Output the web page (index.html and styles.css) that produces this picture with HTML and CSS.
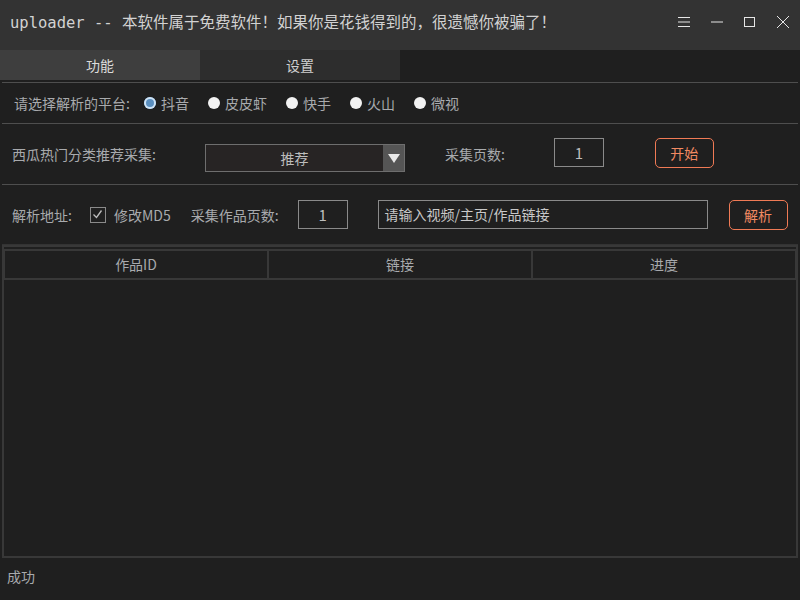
FILE: index.html
```html
<!DOCTYPE html>
<html lang="zh">
<head>
    <meta charset="UTF-8">
    <title>uploader</title>
    <link rel="stylesheet" href="styles.css">
</head>
<body>
    <div class="titlebar">
        <div class="title">uploader -- 本软件属于免费软件！如果你是花钱得到的，很遗憾你被骗了！</div>
        <div class="win-btns">
            <svg width="14" height="12" viewBox="0 0 14 12"><path d="M1 1.5h12M1 6h12M1 10.5h12" stroke="#e6e6e6" stroke-width="1"/></svg>
            <svg width="14" height="12" viewBox="0 0 14 12"><path d="M1 6h12" stroke="#e6e6e6" stroke-width="1"/></svg>
            <svg width="14" height="12" viewBox="0 0 14 12"><rect x="1.5" y="1.5" width="10" height="9" fill="none" stroke="#e6e6e6" stroke-width="1"/></svg>
            <svg width="14" height="14" viewBox="0 0 14 14"><path d="M1 1l12 12M13 1L1 13" stroke="#e6e6e6" stroke-width="1"/></svg>
        </div>
    </div>

    <div class="tabs">
        <div class="tab active">功能</div>
        <div class="tab">设置</div>
    </div>

    <div class="content">
        <div class="row row-platform">
            <span class="label">请选择解析的平台:</span>
            <label class="radio"><span class="dot checked"></span>抖音</label>
            <label class="radio"><span class="dot"></span>皮皮虾</label>
            <label class="radio"><span class="dot"></span>快手</label>
            <label class="radio"><span class="dot"></span>火山</label>
            <label class="radio"><span class="dot"></span>微视</label>
        </div>

        <div class="row row-xigua">
            <span class="label">西瓜热门分类推荐采集:</span>
            <div class="combo">
                <span class="combo-text">推荐</span>
                <span class="combo-arrow"></span>
            </div>
            <span class="label pages-label">采集页数:</span>
            <div class="num-box">1</div>
            <div class="btn">开始</div>
        </div>

        <div class="row row-parse">
            <span class="label">解析地址:</span>
            <label class="check">
                <span class="box"><svg width="13" height="13" viewBox="0 0 13 13"><path d="M2.5 6.5l3 3 5-7" fill="none" stroke="#bdbdbd" stroke-width="1.3"/></svg></span>修改MD5
            </label>
            <span class="label">采集作品页数:</span>
            <div class="num-box">1</div>
            <div class="url-box">请输入视频/主页/作品链接</div>
            <div class="btn">解析</div>
        </div>

        <div class="table">
            <div class="thead">
                <div class="th">作品ID</div>
                <div class="th">链接</div>
                <div class="th">进度</div>
            </div>
        </div>
    </div>

    <div class="status">成功</div>
</body>
</html>
```

FILE: styles.css
```css
* {
    box-sizing: border-box;
}

body {
    margin: 0;
    width: 800px;
    height: 600px;
    background: #1f1f1f;
    font-family: "Noto Sans CJK SC", "Microsoft YaHei", sans-serif;
    font-size: 14px;
    color: #a8aaad;
    overflow: hidden;
}

.titlebar {
    height: 50px;
    background: #333333;
    display: flex;
    align-items: center;
    padding: 0 10px 0 10px;
}
.title {
    flex: 1;
    font-family: "DejaVu Sans Mono", "Noto Sans CJK SC", monospace;
    font-size: 15.5px;
    color: #d2d2d2;
    margin-top: -8px;
}
.win-btns {
    display: flex;
    align-items: center;
    gap: 19px;
    margin-top: -6px;
}

.tabs {
    display: flex;
    height: 30px;
}
.tab {
    width: 200px;
    background: #2d2d2d;
    color: #cfcfcf;
    text-align: center;
    line-height: 30px;
}
.tab.active {
    background: #3e3e3e;
    color: #dcdcdc;
}

.content {
    padding: 0 2px;
    border-top: 2px solid #1f1f1f;
}

.row {
    display: flex;
    align-items: center;
    border-top: 1px solid #4e4e4e;
}
.row-platform {
    height: 41px;
    padding-left: 12px;
}
.row-xigua {
    height: 61px;
    padding-left: 10px;
}
.row-parse {
    height: 61px;
    padding-left: 10px;
    border-bottom: 1px solid #333;
}

/* radio buttons */
.radio {
    display: flex;
    align-items: center;
    margin-left: 19px;
}
.radio:first-of-type {
    margin-left: 14px;
}
.radio .dot {
    width: 12px;
    height: 12px;
    border-radius: 50%;
    background: #f2f2f2;
    margin-right: 5px;
}
.radio .dot.checked {
    background: #5a8fc0;
    box-shadow: inset 0 0 0 2px #cfe3f5;
}

/* combobox */
.combo {
    margin-left: 49px;
    width: 200px;
    height: 28px;
    border: 1px solid #6e6e6e;
    background: #272424;
    display: flex;
    margin-top: 7px;
}
.combo-text {
    flex: 1;
    text-align: center;
    line-height: 26px;
    color: #bdbdbd;
}
.combo-arrow {
    width: 21px;
    background: #555555;
    position: relative;
}
.combo-arrow::after {
    content: "";
    position: absolute;
    left: 5px;
    top: 9px;
    border-left: 6px solid transparent;
    border-right: 6px solid transparent;
    border-top: 9px solid #e8e8e8;
}
.pages-label {
    margin-left: 40px;
}

.num-box {
    width: 50px;
    height: 29px;
    border: 1px solid #8a8a8a;
    text-align: center;
    line-height: 27px;
    color: #bdbdbd;
    font-size: 15px;
}
.row-xigua .num-box {
    margin-left: 49px;
    margin-top: -3px;
}
.btn {
    width: 59px;
    height: 30px;
    border: 1px solid #f07a55;
    border-radius: 5px;
    color: #f28a62;
    text-align: center;
    line-height: 28px;
}
.row-xigua .btn {
    margin-left: 51px;
    margin-top: -3px;
}

/* checkbox */
.check {
    display: flex;
    align-items: center;
    margin-left: 18px;
}
.check .box {
    width: 16px;
    height: 16px;
    border: 1px solid #8a8a8a;
    margin-right: 8px;
    display: flex;
    align-items: center;
    justify-content: center;
}
.row-parse .check + .label {
    margin-left: 20px;
}
.row-parse .num-box {
    margin-left: 19px;
}
.url-box {
    margin-left: 30px;
    width: 330px;
    height: 29px;
    border: 1px solid #8a8a8a;
    line-height: 27px;
    padding-left: 6px;
    color: #c8c8c8;
}
.row-parse .btn {
    margin-left: 21px;
}

/* result table */
.table {
    height: 313px;
    border: 2px solid #383838;
    padding-top: 2px;
}
.thead {
    display: flex;
    height: 31px;
}
.th {
    flex: 1;
    border: 2px solid #383838;
    border-left-width: 1px;
    border-right-width: 1px;
    text-align: center;
    line-height: 27px;
}

.status {
    padding: 8px 0 0 7px;
}
```
